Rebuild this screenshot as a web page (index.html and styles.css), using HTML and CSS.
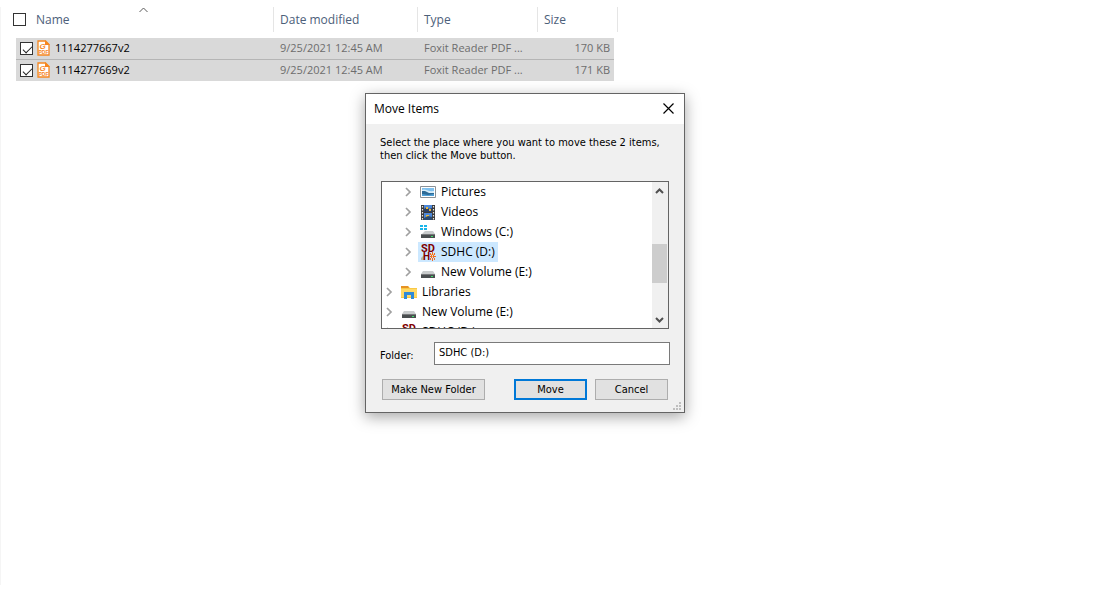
FILE: index.html
```html
<!DOCTYPE html>
<html lang="en">
<head>
    <meta charset="UTF-8">
    <meta name="viewport" content="width=device-width, initial-scale=1.0">
    <title>Move Items</title>
    <link rel="stylesheet" href="styles.css">
</head>
<body>

<!-- shared icons -->
<svg class="defs" aria-hidden="true">
    <symbol id="pdf" viewBox="0 0 13 16">
        <path d="M1 1h7.500l3.500 3.500V15H1z" fill="#fff" stroke="#f6871f" stroke-width="1.300"/>
        <path d="M8 0l5 5H8z" fill="#f6871f"/>
        <text x="2.500" y="9" class="icon-g">G</text>
        <text x="1.500" y="14" class="icon-pdf">PDF</text>
    </symbol>
    <symbol id="chevron" viewBox="0 0 17 20">
        <path d="M5 6l4 4-4 4" fill="none" stroke="#a0a0a0" stroke-width="1.700"/>
    </symbol>
    <symbol id="pictures" viewBox="0 0 16 16">
        <path d="M.5 2.500h15v11H.5z" fill="#fff" stroke="#8b9196"/>
        <path d="M2 4h12v8H2z" fill="#7fc0ee"/>
        <path d="M2 6c3-2 5 2 12 1v2H2z" fill="#d6ecf8"/>
        <path d="M2 7l3 0 4 2h5v3H2z" fill="#2c6a96"/>
        <path d="M2 10l6 1 6-1v2H2z" fill="#4f9fd6"/>
    </symbol>
    <symbol id="videos" viewBox="0 0 16 16">
        <path d="M1 1h14v15H1z" fill="#3a3a3a"/>
        <path d="M4 1h8v7H4zM4 9h8v7H4z" fill="#4c87d8"/>
        <path d="M4 5l3-2 2 2 3-1v4H4z" fill="#2b3e63"/>
        <path d="M6 3h2v2H6zM9 5h2v2H9zM6 11h3v2H6z" fill="#e8b93c"/>
        <path d="M4 14l4-2 4 1v3H4z" fill="#2b4b70"/>
        <path d="M2.500 2v14M13.500 2v14" stroke="#e6e6e6" stroke-width="1.200" stroke-dasharray="1.500 1.500"/>
    </symbol>
    <symbol id="drive" viewBox="0 0 16 16">
        <path d="M3 7h10l2 3H1z" fill="#c9cccd"/>
        <path d="M1 10h14v4H1z" fill="#4a4e50"/>
        <path d="M1 10h14v1H1z" fill="#77797b"/>
        <path d="M11 12h2v1h-2z" fill="#3fe26b"/>
    </symbol>
    <symbol id="windrive" viewBox="0 0 16 16">
        <path d="M5 7h8l2 3H2z" fill="#c9cccd"/>
        <path d="M1 10h14v4H1z" fill="#4a4e50"/>
        <path d="M1 10h14v1H1z" fill="#77797b"/>
        <path d="M11 12h2v1h-2z" fill="#3fe26b"/>
        <path d="M0 1h3v2H0zM4 1h3v2H4zM0 4h3v2H0zM4 4h3v2H4z" fill="#19b5ea"/>
    </symbol>
    <symbol id="sdhc" viewBox="0 0 16 18">
        <path d="M1 17v-2l4-4v6z" fill="#b9b2a0"/>
        <text x="1" y="9" class="icon-sd">SD</text>
        <text x="3" y="17" class="icon-h">H</text>
        <path d="M10 10h1v2h-1zM12 9h1v3h-1zM14 10h1v2h-1zM11 12h1v1h-1zM13 12h1v1h-1zM10 13h6v1h-6zM11 14h1v1h-1zM13 14h1v1h-1zM10 15h1v2h-1zM12 15h1v3h-1zM14 15h1v2h-1z" fill="#f26a21"/>
        <path d="M12 13h1v1h-1zM11 11h1v1h-1zM13 11h1v1h-1z" fill="#f9c06a"/>
    </symbol>
    <symbol id="libraries" viewBox="0 0 16 16">
        <path d="M0 2h7l2 2h7v10H0z" fill="#f9c846"/>
        <path d="M0 2h7l1 2H0z" fill="#e69224"/>
        <path d="M0 5h16v8H0z" fill="#ffd966"/>
        <path d="M3 8h10v7h-3v-4H6v4H3z" fill="#2f8ad8"/>
    </symbol>
</svg>

<div id="explorer">
    <table class="files">
        <colgroup>
            <col class="col-gutter">
            <col class="col-name">
            <col class="col-date">
            <col class="col-type">
            <col class="col-size">
            <col class="col-end">
        </colgroup>
        <thead>
            <tr>
                <th colspan="2" class="name-head">
                    <div class="head-cell">
                        <input type="checkbox" id="all">
                        <label for="all">Name</label>
                    </div>
                    <svg class="sort" width="9" height="6" viewBox="0 0 9 6"><path d="M.5 5l4-4 4 4" fill="none" stroke="#5a5a5a"/></svg>
                </th>
                <th>Date modified</th>
                <th>Type</th>
                <th colspan="2">Size</th>
            </tr>
        </thead>
        <tbody>
            <tr>
                <td></td>
                <td>
                    <div class="file-cell">
                        <input type="checkbox" id="file-1" checked>
                        <svg width="13" height="16"><use href="#pdf"/></svg>
                        <label for="file-1">1114277667v2</label>
                    </div>
                </td>
                <td>9/25/2021 12:45 AM</td>
                <td>Foxit Reader PDF ...</td>
                <td class="size">170 KB</td>
                <td></td>
            </tr>
            <tr>
                <td></td>
                <td>
                    <div class="file-cell">
                        <input type="checkbox" id="file-2" checked>
                        <svg width="13" height="16"><use href="#pdf"/></svg>
                        <label for="file-2">1114277669v2</label>
                    </div>
                </td>
                <td>9/25/2021 12:45 AM</td>
                <td>Foxit Reader PDF ...</td>
                <td class="size">171 KB</td>
                <td></td>
            </tr>
        </tbody>
    </table>
</div>

<div id="dialog" role="dialog" aria-labelledby="dialog-title">
    <div class="title-bar">
        <span id="dialog-title">Move Items</span>
        <button class="close" aria-label="Close">
            <svg width="11" height="11" viewBox="0 0 11 11"><path d="M.5.5l10 10M10.500.5l-10 10" stroke="#000" stroke-width="1.200"/></svg>
        </button>
    </div>
    <div class="dialog-body">
        <p>Select the place where you want to move these 2 items,<br>then click the Move button.</p>

        <div class="tree-box">
            <ul class="tree">
                <li class="child"><svg class="twisty"><use href="#chevron"/></svg><span class="node"><svg class="icon"><use href="#pictures"/></svg>Pictures</span></li>
                <li class="child"><svg class="twisty"><use href="#chevron"/></svg><span class="node"><svg class="icon"><use href="#videos"/></svg>Videos</span></li>
                <li class="child"><svg class="twisty"><use href="#chevron"/></svg><span class="node"><svg class="icon"><use href="#windrive"/></svg>Windows (C:)</span></li>
                <li class="child"><svg class="twisty"><use href="#chevron"/></svg><span class="node selected"><svg class="icon tall"><use href="#sdhc"/></svg>SDHC (D:)</span></li>
                <li class="child"><svg class="twisty"><use href="#chevron"/></svg><span class="node"><svg class="icon"><use href="#drive"/></svg>New Volume (E:)</span></li>
                <li><svg class="twisty"><use href="#chevron"/></svg><span class="node"><svg class="icon"><use href="#libraries"/></svg>Libraries</span></li>
                <li><svg class="twisty"><use href="#chevron"/></svg><span class="node"><svg class="icon"><use href="#drive"/></svg>New Volume (E:)</span></li>
                <li><svg class="twisty"><use href="#chevron"/></svg><span class="node"><svg class="icon tall"><use href="#sdhc"/></svg>SDHC (D:)</span></li>
            </ul>
            <div class="scrollbar">
                <svg width="15" height="17" viewBox="0 0 15 17"><path d="M4 11l3.500-3.500L11 11" fill="none" stroke="#505050" stroke-width="2"/></svg>
                <div class="track"><div class="thumb"></div></div>
                <svg width="15" height="17" viewBox="0 0 15 17"><path d="M4 7l3.500 3.500L11 7" fill="none" stroke="#505050" stroke-width="2"/></svg>
            </div>
        </div>

        <div class="folder-row">
            <label for="folder">Folder:</label>
            <input type="text" id="folder" value="SDHC (D:)">
        </div>

        <div class="buttons">
            <button class="new-folder">Make New Folder</button>
            <button class="default">Move</button>
            <button>Cancel</button>
        </div>
    </div>
    <svg class="grip" width="8" height="8" viewBox="0 0 8 8"><path d="M6 0h2v2H6zM3 3h2v2H3zM6 3h2v2H6zM0 6h2v2H0zM3 6h2v2H3zM6 6h2v2H6z" fill="#bfbfbf"/></svg>
</div>

</body>
</html>
```
FILE: styles.css
```css
* {
    box-sizing: border-box;
}

body {
    margin: 0;
    background: #fff;
    font-family: "Open Sans", "Noto Sans", sans-serif;
    font-size: 12px;
    color: #000;
}

.defs {
    display: none;
}

svg {
    display: block;
    flex: none;
}

/* lettering inside the icons */
.icon-g {
    font: italic bold 8px "Liberation Sans", sans-serif;
    fill: #f6871f;
}

.icon-pdf {
    font: bold 5px "Liberation Sans", sans-serif;
    fill: #f6871f;
}

.icon-sd {
    font: bold 11px Roboto, sans-serif;
    fill: #800000;
}

.icon-h {
    font: bold 10px Roboto, sans-serif;
    fill: #800000;
}

#explorer {
    height: calc(100vh - 37px);
    margin-top: 7px;
    border-left: 1px solid #f5f5f5;
}

/* file list */
.files {
    table-layout: fixed;
    width: 617px;
    border-collapse: separate;
    border-spacing: 0;
    white-space: nowrap;
}

.col-gutter { width: 15px; }
.col-name { width: 258px; }
.col-date { width: 144px; }
.col-type { width: 120px; }
.col-size { width: 76px; }
.col-end { width: 4px; }

.files th {
    height: 31px;
    padding: 0 6px 6px;
    background: linear-gradient(#e5e5e5, #e5e5e5) no-repeat right top / 1px 25px;
    color: #4c607a;
    font-weight: normal;
    text-align: left;
}

.files .name-head {
    position: relative;
    padding-left: 12px;
}

.head-cell {
    display: flex;
    align-items: center;
    gap: 10px;
}

.sort {
    position: absolute;
    top: 0;
    left: 138px;
}

.files td {
    height: 21px;
    padding: 0 6px;
    color: #6d6d6d;
    font-size: 11px;
    line-height: 20px;
    vertical-align: top;
}

.files td:not(:first-child):not(:last-child) {
    background: #d9d9d9;
}

.files tbody tr:first-child td {
    height: 22px;
}

.files tbody tr:first-child td:not(:first-child):not(:last-child) {
    border-bottom: 1px solid #b5b5b5;
}

.files td:nth-child(2) {
    padding-left: 4px;
}

.files td.size {
    padding-right: 4px;
    text-align: right;
}

.file-cell {
    display: flex;
    align-items: center;
    color: #000;
}

.file-cell svg {
    margin: 0 5px 0 4px;
}

input[type="checkbox"] {
    appearance: none;
    flex: none;
    width: 13px;
    height: 13px;
    margin: 0;
    border: 1px solid #333;
    background: #fff;
}

input[type="checkbox"]:checked::before {
    content: "";
    display: block;
    width: 8px;
    height: 4px;
    margin: 3px 2px;
    border-left: 1px solid #222;
    border-bottom: 1px solid #222;
    transform: rotate(-45deg);
}

/* move dialog */
#dialog {
    position: absolute;
    top: 93px;
    left: 365px;
    width: 320px;
    border: 1px solid #646464;
    background: #f0f0f0;
    box-shadow: 0 4px 14px rgba(0, 0, 0, 0.35);
}

.title-bar {
    display: flex;
    align-items: center;
    justify-content: space-between;
    height: 30px;
    padding: 0 10px 2px 8px;
    background: #fff;
}

.close {
    padding: 0;
    border: none;
    background: none;
}

.dialog-body {
    padding: 12px 14px;
    font-family: "DejaVu Sans Condensed", "Open Sans", sans-serif;
    font-size: 11px;
}

.dialog-body p {
    margin: 0 0 19px;
    line-height: 13px;
    white-space: nowrap;
}

.tree-box {
    display: flex;
    height: 148px;
    margin: 0 1px 13px;
    border: 1px solid #646464;
    background: #fff;
    overflow: hidden;
}

.tree {
    flex: 1;
    margin: 0;
    padding: 0;
    list-style: none;
    font-family: "Open Sans", "Noto Sans", sans-serif;
    font-size: 12px;
}

.tree li {
    display: flex;
    height: 20px;
}

.tree .child {
    padding-left: 19px;
}

.twisty {
    width: 17px;
    height: 20px;
}

.node {
    display: flex;
    align-items: center;
    gap: 5px;
    padding: 0 3px 0 2px;
    line-height: 20px;
}

.selected {
    background: #cce8ff;
}

.icon {
    width: 16px;
    height: 16px;
}

.tall {
    height: 18px;
}

.scrollbar {
    display: flex;
    flex-direction: column;
    width: 16px;
    background: #f0f0f0;
}

.track {
    flex: 1;
    padding-top: 45px;
}

.thumb {
    width: 15px;
    height: 39px;
    background: #cdcdcd;
}

.folder-row {
    display: flex;
    align-items: center;
    margin-bottom: 14px;
}

.folder-row label {
    width: 54px;
    padding-top: 3px;
}

.folder-row input {
    flex: 1;
    min-width: 0;
    height: 23px;
    padding: 0 4px 2px;
    border: 1px solid #7a7a7a;
    background: #fff;
    font: inherit;
}

.buttons {
    display: flex;
    gap: 8px;
    margin: 0 2px;
}

.buttons button {
    width: 73px;
    height: 21px;
    padding: 0;
    border: 1px solid #adadad;
    background: #e1e1e1;
    color: #000;
    font: inherit;
}

.buttons .new-folder {
    width: 103px;
    margin-right: auto;
}

.buttons .default {
    border: 2px solid #0078d7;
}

.grip {
    position: absolute;
    right: 3px;
    bottom: 2px;
}
```
